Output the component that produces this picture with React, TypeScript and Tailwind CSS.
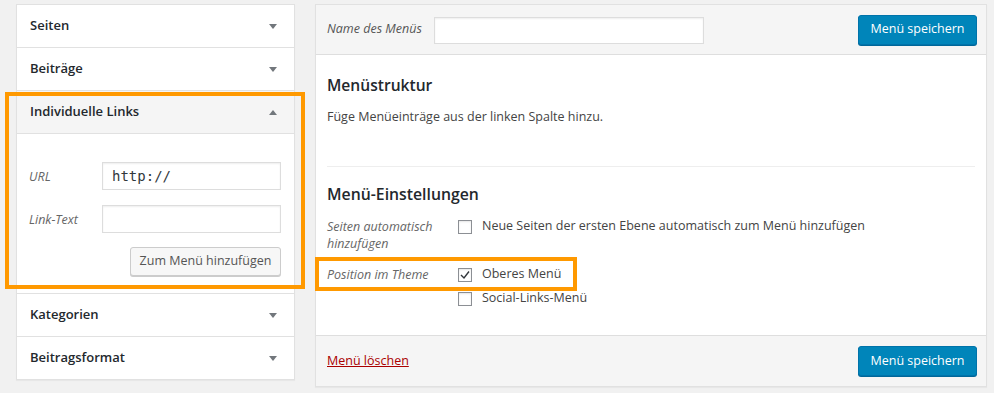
import React from 'react'

const font = { fontFamily: '"Open Sans", "Noto Sans", sans-serif' }

function Arrow({ up = false }: { up?: boolean }) {
  return (
    <svg width="8" height="5" viewBox="0 0 8 5" className="shrink-0">
      {up ? <polygon points="0,5 8,5 4,0" fill="#72777c" /> : <polygon points="0,0 8,0 4,5" fill="#72777c" />}
    </svg>
  )
}

function AccordionRow({ title, open = false, first = false }: { title: string; open?: boolean; first?: boolean }) {
  return (
    <div
      className={`flex items-center justify-between pl-[13px] pr-[17px] ${first ? 'h-[42px]' : 'h-[43px] border-t border-[#e1e1e1]'} ${open ? 'bg-[#f5f5f5]' : 'bg-white'}`}
    >
      <span className="text-[13px] font-semibold text-[#23282d]">{title}</span>
      <Arrow up={open} />
    </div>
  )
}

function Checkbox({ checked = false }: { checked?: boolean }) {
  return (
    <span className="w-[14px] h-[14px] border border-[#8c8f94] bg-white shadow-[inset_0_1px_2px_rgba(0,0,0,0.1)] flex items-center justify-center shrink-0">
      {checked && (
        <svg width="12" height="12" viewBox="0 0 12 12">
          <polyline points="2,6 5,9 10,2.5" fill="none" stroke="#32373c" strokeWidth="1.4" />
        </svg>
      )}
    </span>
  )
}

function PrimaryButton() {
  return (
    <button className="h-[30px] w-[119px] rounded-[3px] bg-[#0085ba] border border-[#0073aa] shadow-[0_1px_0_#006799] text-white text-[12.5px]">
      Menü speichern
    </button>
  )
}

export default function App() {
  return (
    <div className="relative w-[994px] h-[393px] bg-[#f1f1f1] overflow-hidden" style={font}>
      <div className="flex items-start gap-[20px] pl-[16px] pt-[4px]">
        {/* left column: accordion */}
        <div className="w-[279px] border border-[#e1e1e1] bg-white shadow-[0_1px_1px_rgba(0,0,0,0.04)]">
          <AccordionRow title="Seiten" first />
          <AccordionRow title="Beiträge" />
          <AccordionRow title="Individuelle Links" open />
          <div className="h-[160px] border-t border-[#e1e1e1] bg-white pt-[28px] pl-[12px] pr-[13px] flex flex-col">
            <div className="flex items-center h-[28px]">
              <span className="w-[73px] italic text-[12.5px] text-[#666] pt-[3px]">URL</span>
              <div className="flex-1 h-[28px] border border-[#ddd] shadow-[inset_0_1px_2px_rgba(0,0,0,0.07)] flex items-center pl-[9px] text-[14px] text-[#32373c]" style={{ fontFamily: '"DejaVu Sans Mono", "Liberation Mono", monospace' }}>
                http://
              </div>
            </div>
            <div className="flex items-center h-[28px] mt-[15px]">
              <span className="w-[73px] italic text-[12.5px] text-[#666] pt-[3px]">Link-Text</span>
              <div className="flex-1 h-[28px] border border-[#ddd] shadow-[inset_0_1px_2px_rgba(0,0,0,0.07)]" />
            </div>
            <div className="flex justify-end mt-[14px]">
              <button className="h-[29px] w-[151px] rounded-[3px] bg-[#f7f7f7] border border-[#ccc] shadow-[0_1px_0_#ccc] text-[12.5px] text-[#555]">
                Zum Menü hinzufügen
              </button>
            </div>
          </div>
          <AccordionRow title="Kategorien" />
          <AccordionRow title="Beitragsformat" />
        </div>

        {/* right column: menu editor */}
        <div className="w-[672px] border border-[#e1e1e1] bg-white shadow-[0_1px_1px_rgba(0,0,0,0.04)]">
          <div className="h-[50px] bg-[#f5f5f5] border-b border-[#dedede] flex items-center justify-between pl-[11px] pr-[9px]">
            <div className="flex items-center">
              <span className="italic text-[12.5px] text-[#555] w-[107px]">Name des Menüs</span>
              <div className="w-[270px] h-[27px] mt-[2px] bg-white border border-[#ddd] shadow-[inset_0_1px_2px_rgba(0,0,0,0.07)]" />
            </div>
            <PrimaryButton />
          </div>

          <div className="h-[280px] px-[11px] pt-[18px] flex flex-col">
            <h2 className="text-[15.6px] font-semibold text-[#23282d] leading-[24px]">Menüstruktur</h2>
            <p className="text-[12.5px] text-[#444] mt-[11px] leading-[18px]">Füge Menüeinträge aus der linken Spalte hinzu.</p>
            <div className="border-t border-[#eee] mt-[40px]" />
            <h2 className="text-[15.8px] font-semibold text-[#23282d] leading-[24px] mt-[15px]">Menü-Einstellungen</h2>
            <div className="flex mt-[12px]">
              <div className="w-[131px] italic text-[12.5px] text-[#666] leading-[17px]">
                Seiten automatisch
                <br />
                hinzufügen
              </div>
              <div className="flex items-center gap-[10px] h-[17px]">
                <Checkbox />
                <span className="text-[12.5px] text-[#444]">Neue Seiten der ersten Ebene automatisch zum Menü hinzufügen</span>
              </div>
            </div>
            <div className="flex mt-[14px]">
              <div className="w-[131px] italic text-[12.5px] text-[#666] leading-[17px]">Position im Theme</div>
              <div className="flex flex-col gap-[7px]">
                <div className="flex items-center gap-[10px] h-[17px]">
                  <Checkbox checked />
                  <span className="text-[12.5px] text-[#444]">Oberes Menü</span>
                </div>
                <div className="flex items-center gap-[10px] h-[17px]">
                  <Checkbox />
                  <span className="text-[12.5px] text-[#444]">Social-Links-Menü</span>
                </div>
              </div>
            </div>
          </div>

          <div className="h-[51px] bg-[#f5f5f5] border-t border-[#dedede] flex items-center justify-between pl-[11px] pr-[9px]">
            <a href="#" className="text-[12.5px] text-[#a00] underline">Menü löschen</a>
            <PrimaryButton />
          </div>
        </div>
      </div>

      {/* orange highlight frames */}
      <div className="absolute left-[5px] top-[92px] w-[300px] h-[197px] border-[4px] border-[#ff9900] pointer-events-none" />
      <div className="absolute left-[315px] top-[257px] w-[262px] h-[34px] border-[4px] border-[#ff9900] pointer-events-none" />
    </div>
  )
}
